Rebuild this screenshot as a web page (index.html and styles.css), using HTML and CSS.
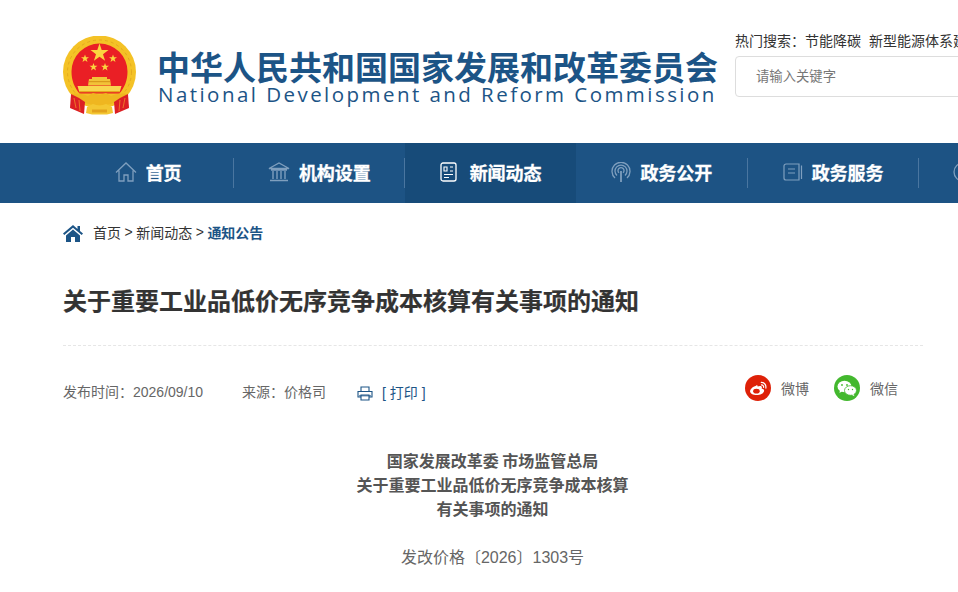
FILE: index.html
```html
<!DOCTYPE html>
<html lang="zh-CN">
<head>
<meta charset="utf-8">
<title>关于重要工业品低价无序竞争成本核算有关事项的通知</title>
<link rel="stylesheet" href="styles.css">
</head>
<body>
<div class="page">
  <header class="header">
    <div class="brand">
      <svg class="emblem" width="75" height="80" viewBox="0 0 75 80">
        <circle cx="37.500" cy="36" r="36.500" fill="#f4c226"/>
        <circle cx="37.500" cy="36" r="32" fill="none" stroke="#e4a91e" stroke-width="1" stroke-dasharray="3 3"/>
        <path d="M37.500 7.500a28 28 0 0 1 28 28c0 9-3 16-8 22H17.500c-5-6-8-13-8-22a28 28 0 0 1 28-28z" fill="#ea1f25"/>
        <polygon points="37.500,7.500 39.700,14 46.500,14 41,18.200 43.100,24.800 37.500,20.700 31.900,24.800 34,18.200 28.500,14 35.300,14" fill="#fbd53f"/>
        <polygon points="23,18.500 24,21.300 27,21.300 24.600,23.100 25.500,26 23,24.300 20.500,26 21.400,23.100 19,21.300 22,21.300" fill="#fbd53f"/>
        <polygon points="51,18.500 52,21.300 55,21.300 52.600,23.100 53.500,26 51,24.300 48.500,26 49.400,23.100 47,21.300 50,21.300" fill="#fbd53f"/>
        <polygon points="31.500,27 32.500,29.800 35.500,29.800 33.100,31.600 34,34.500 31.500,32.800 29,34.500 29.900,31.600 27.500,29.800 30.500,29.800" fill="#fbd53f"/>
        <polygon points="43,27 44,29.800 47,29.800 44.600,31.600 45.500,34.500 43,32.800 40.500,34.500 41.400,31.600 39,29.800 42,29.800" fill="#fbd53f"/>
        <path d="M30 41h15v2h3l1 6.500H26l1-6.500h3z" fill="#f2c338"/>
        <path d="M27 45h21v1.200H27z" fill="#d99a1c"/>
        <path d="M15.500 50h44l-1.500 5H17z" fill="#f9d650"/>
        <path d="M17 55h41v1.200H17z" fill="#e6a81d"/>
        <path d="M10 58c6-1 11 0 16 2l5-3 6.500 2 6.500-2 5 3c5-2 10-3 16-2l-4 6-12 4-6 1H32l-6-1-12-4z" fill="#efb620"/>
        <path d="M9 58l8 4 6 4-1 12-7-3-7-3z" fill="#dc1f24"/>
        <path d="M66 58l-8 4-6 4 1 12 7-3 7-3z" fill="#dc1f24"/>
        <path d="M12 62l2 10M17 64l1 11M63 62l-2 10M58 64l-1 11" stroke="#f08a2a" stroke-width=".8"/>
        <path d="M25 71l6-3 6.500 2 6.500-2 6 3 1 6-6 1.500H30L24 77z" fill="#f4c733"/>
        <path d="M30 73.500h15v3H30z" fill="#e2a21d"/>
      </svg>
      <div class="brand-text">
        <div class="brand-cn">中华人民共和国国家发展和改革委员会</div>
        <div class="brand-en">National Development and Reform Commission</div>
      </div>
    </div>
    <div class="search">
      <div class="hot"><span>热门搜索：</span><span class="hot-item">节能降碳</span><span class="hot-item">新型能源体系建设</span></div>
      <div class="search-box">请输入关键字</div>
    </div>
  </header>

  <nav class="nav">
    <a class="nav-item">
      <svg class="nav-icon" viewBox="0 0 22 20" width="22" height="20"><path d="M1 10.500 11 1l10 9.500M4 8.500V19h5v-6h4v6h5V8.500" fill="none" stroke="#7f9fbe" stroke-width="1.300"/></svg>
      首页
    </a>
    <a class="nav-item">
      <svg class="nav-icon" viewBox="0 0 22 20" width="22" height="20"><path d="M1 6.500 11 1l10 5.500zM3 8h16M5 9v8M9 9v8M13 9v8M17 9v8M2 18.500h18" fill="none" stroke="#7f9fbe" stroke-width="1.400"/></svg>
      机构设置
    </a>
    <a class="nav-item active">
      <svg class="nav-icon" viewBox="0 0 18 20" width="18" height="20"><rect x="1" y="1" width="15" height="18" rx="2" fill="none" stroke="#fff" stroke-width="1.300"/><path d="M4 5h3v4H4zM10 5h3M10 9h3M4 12.500h9M4 15.500h5" fill="none" stroke="#fff" stroke-width="1.100"/></svg>
      新闻动态
    </a>
    <a class="nav-item">
      <svg class="nav-icon" viewBox="0 0 20 20" width="20" height="20"><path d="M4 16A9 9 0 1 1 16 16M6 13.500A6 6 0 1 1 14 13.500M8 10.800A3 3 0 1 1 12 10.800" fill="none" stroke="#7f9fbe" stroke-width="1.300"/><path d="M10 9v11" stroke="#7f9fbe" stroke-width="1.800"/></svg>
      政务公开
    </a>
    <a class="nav-item">
      <svg class="nav-icon" viewBox="0 0 20 20" width="20" height="20"><path d="M16 2H3a2 2 0 0 0-2 2v12a2 2 0 0 0 2 2h13zM5 7h7M5 11h7M18.500 3.500V17" fill="none" stroke="#7f9fbe" stroke-width="1.200"/></svg>
      政务服务
    </a>
    <a class="nav-item nav-last">
      <svg class="nav-icon" viewBox="0 0 20 20" width="20" height="20"><circle cx="10" cy="10" r="9" fill="none" stroke="#7f9fbe" stroke-width="1.300"/></svg>
    </a>
  </nav>

  <main class="main">
    <div class="crumbs">
      <svg class="crumb-home" viewBox="0 0 20 17" width="20" height="17"><path d="M10 0 0 8.500l1.300 1.400L10 2.700l8.700 7.200L20 8.500l-3-2.500V1h-2.500v2.900zM3 10.500V17h5v-5h4v5h5v-6.500L10 4.500z" fill="#1c5486"/></svg>
      <span>首页</span><span class="sep">&gt;</span><span>新闻动态</span><span class="sep">&gt;</span><span class="crumb-current">通知公告</span>
    </div>
    <h1 class="title">关于重要工业品低价无序竞争成本核算有关事项的通知</h1>
    <div class="meta">
      <div class="meta-left">
        <span class="date">发布时间：2026/09/10</span>
        <span class="source">来源：价格司</span>
        <span class="print">
          <svg viewBox="0 0 16 15" width="16" height="15"><path d="M4 5V1h8v4M4 11H1V5.500h14V11h-3M4 9h8v5H4z" fill="none" stroke="#1c5486" stroke-width="1.100"/><path d="M2 9h12v1.500H2z" fill="#1c5486" opacity=".6"/></svg>
          <span class="print-text">[ 打印 ]</span>
        </span>
      </div>
      <div class="share">
        <span class="share-item">
          <span class="share-icon weibo">
            <svg viewBox="0 0 20 16" width="19" height="15"><path d="M8 5C4.500 5.500 1 8.500 1 11c0 2.500 3.200 4 7 4 4.500 0 8-2.300 8-4.700 0-1.700-1.800-2-2.600-2.400.5-1.300.3-2.600-1.700-2.600-1.100 0-2 .5-2.700.6.300-1.200-.2-1.600-2-.9z" fill="#fff"/><ellipse cx="7.800" cy="10.800" rx="3.500" ry="2.600" fill="#de2108"/><path d="M13 1.500c3 0 5.500 2.500 4.800 6M13.200 4.200c1.400-.1 2.500 1 2.200 2.500" fill="none" stroke="#fff" stroke-width="1.300" stroke-linecap="round"/></svg>
          </span>微博
        </span>
        <span class="share-item">
          <span class="share-icon wechat">
            <svg viewBox="0 0 20 17" width="20" height="17"><ellipse cx="7.500" cy="6.500" rx="7" ry="5.800" fill="#fff"/><path d="M3 10l-.5 3 3-2z" fill="#fff"/><ellipse cx="13.500" cy="10.500" rx="6" ry="4.800" fill="#fff" stroke="#43b82e" stroke-width=".8"/><path d="M16.500 14l1 2.200-3-1.500z" fill="#fff"/><circle cx="5" cy="5" r=".9" fill="#43b82e"/><circle cx="10" cy="5" r=".9" fill="#43b82e"/><circle cx="11.500" cy="9.500" r=".7" fill="#43b82e"/><circle cx="15.500" cy="9.500" r=".7" fill="#43b82e"/></svg>
          </span>微信
        </span>
      </div>
    </div>
    <article class="article">
      <p class="art-head">国家发展改革委 市场监管总局<br>关于重要工业品低价无序竞争成本核算<br>有关事项的通知</p>
      <p class="art-no">发改价格〔2026〕1303号</p>
    </article>
  </main>
</div>
</body>
</html>
```

FILE: styles.css
```css
* { box-sizing: border-box; }
html, body { margin: 0; padding: 0; background: #fff; }
body {
  width: 958px;
  height: 592px;
  overflow: hidden;
  font-family: "Liberation Sans", "Noto Sans CJK SC", sans-serif;
}
.page { width: 958px; overflow: hidden; }

.header {
  height: 143px;
  display: flex;
  padding-left: 62px;
}
.brand {
  display: flex;
  width: 673px;
  padding-top: 36px;
  flex: none;
}
.emblem { flex: none; }
.brand-text { margin-left: 20px; padding-top: 13px; }
.brand-cn {
  font-family: "Noto Sans CJK SC", sans-serif;
  font-size: 33px;
  font-weight: 700;
  line-height: 34px;
  color: #1c5486;
  white-space: nowrap;
}
.brand-en {
  font-family: "Open Sans", sans-serif;
  font-size: 20.500px;
  line-height: 22px;
  letter-spacing: 2.450px;
  margin-left: 1px;
  color: #1c5486;
  white-space: nowrap;
}
.search { flex: none; width: 400px; padding-top: 31px; }
.hot {
  font-size: 14px;
  line-height: 18px;
  color: #333;
  white-space: nowrap;
  font-family: "Noto Sans CJK SC", sans-serif;
}
.hot-item { margin-right: 8px; }
.search-box {
  margin-top: 7px;
  height: 41px;
  width: 400px;
  border: 1px solid #ddd;
  border-radius: 4px;
  padding-left: 20px;
  line-height: 38px;
  font-size: 13.333px;
  color: #777;
  font-family: "Noto Sans CJK SC", sans-serif;
}

.nav {
  height: 60px;
  background: #1d5384;
  display: flex;
  padding-left: 62.500px;
  width: 1200px;
}
.nav-item {
  flex: none;
  width: 171.250px;
  height: 60px;
  display: flex;
  align-items: center;
  justify-content: center;
  gap: 9px;
  padding-bottom: 2px;
  color: #fff;
  font-size: 18px;
  font-weight: 700;
  -webkit-text-stroke: 0.3px #fff;
  font-family: "Noto Sans CJK SC", sans-serif;
  position: relative;
}
.nav-item::after {
  content: "";
  position: absolute;
  right: 0;
  top: 15px;
  height: 30px;
  width: 1px;
  background: #4a76a0;
}
.nav-item.active { background: #174b79; gap: 12px; }
.nav-item.active::after { display: none; }
.nav-last { justify-content: flex-start; padding-left: 34px; }
.nav-icon { flex: none; }

.main { padding: 0 35px 0 63px; }
.crumbs {
  display: flex;
  align-items: center;
  height: 60px;
  padding-bottom: 2px;
  font-size: 14px;
  color: #333;
  font-family: "Noto Sans CJK SC", sans-serif;
}
.crumb-home { margin-right: 10px; margin-top: 2px; }
.sep { margin: 0 3.500px; font-family: "Liberation Sans", sans-serif; }
.crumb-current { color: #1c5486; font-weight: 700; }
.title {
  margin: 0;
  padding-top: 19px;
  height: 83px;
  border-bottom: 1px dashed #e6e6e6;
  font-family: "Noto Sans CJK SC", sans-serif;
  font-size: 24px;
  font-weight: 700;
  -webkit-text-stroke: 0.2px #333;
  line-height: 36px;
  color: #333;
}
.meta {
  display: flex;
  justify-content: space-between;
  height: 102px;
  padding-top: 29px;
}
.meta-left { display: flex; align-items: flex-start; padding-top: 7px; font-size: 14px; color: #666; line-height: 20px; }
.date { width: 179px; }
.source { width: 115px; }
.print { display: flex; align-items: center; gap: 9px; color: #1c5486; padding-top: 1px; }
.print-text { font-size: 14px; }
.share { display: flex; padding-right: 25px; gap: 25px; }
.share-item { display: flex; align-items: center; height: 26px; gap: 10px; font-size: 14px; color: #666; }
.share-icon {
  width: 26px;
  height: 26px;
  border-radius: 50%;
  display: flex;
  align-items: center;
  justify-content: center;
}
.weibo { background: #de2108; }
.wechat { background: #43b82e; }

.article { text-align: center; color: #555; padding-right: 1px; }
.art-head {
  margin: 0;
  font-family: "Noto Sans CJK SC", sans-serif;
  font-size: 16px;
  font-weight: 700;
  line-height: 24px;
  text-align: center;
}
.art-no {
  margin: 26px 0 0;
  font-size: 16px;
  line-height: 24px;
  color: #666;
}
```
